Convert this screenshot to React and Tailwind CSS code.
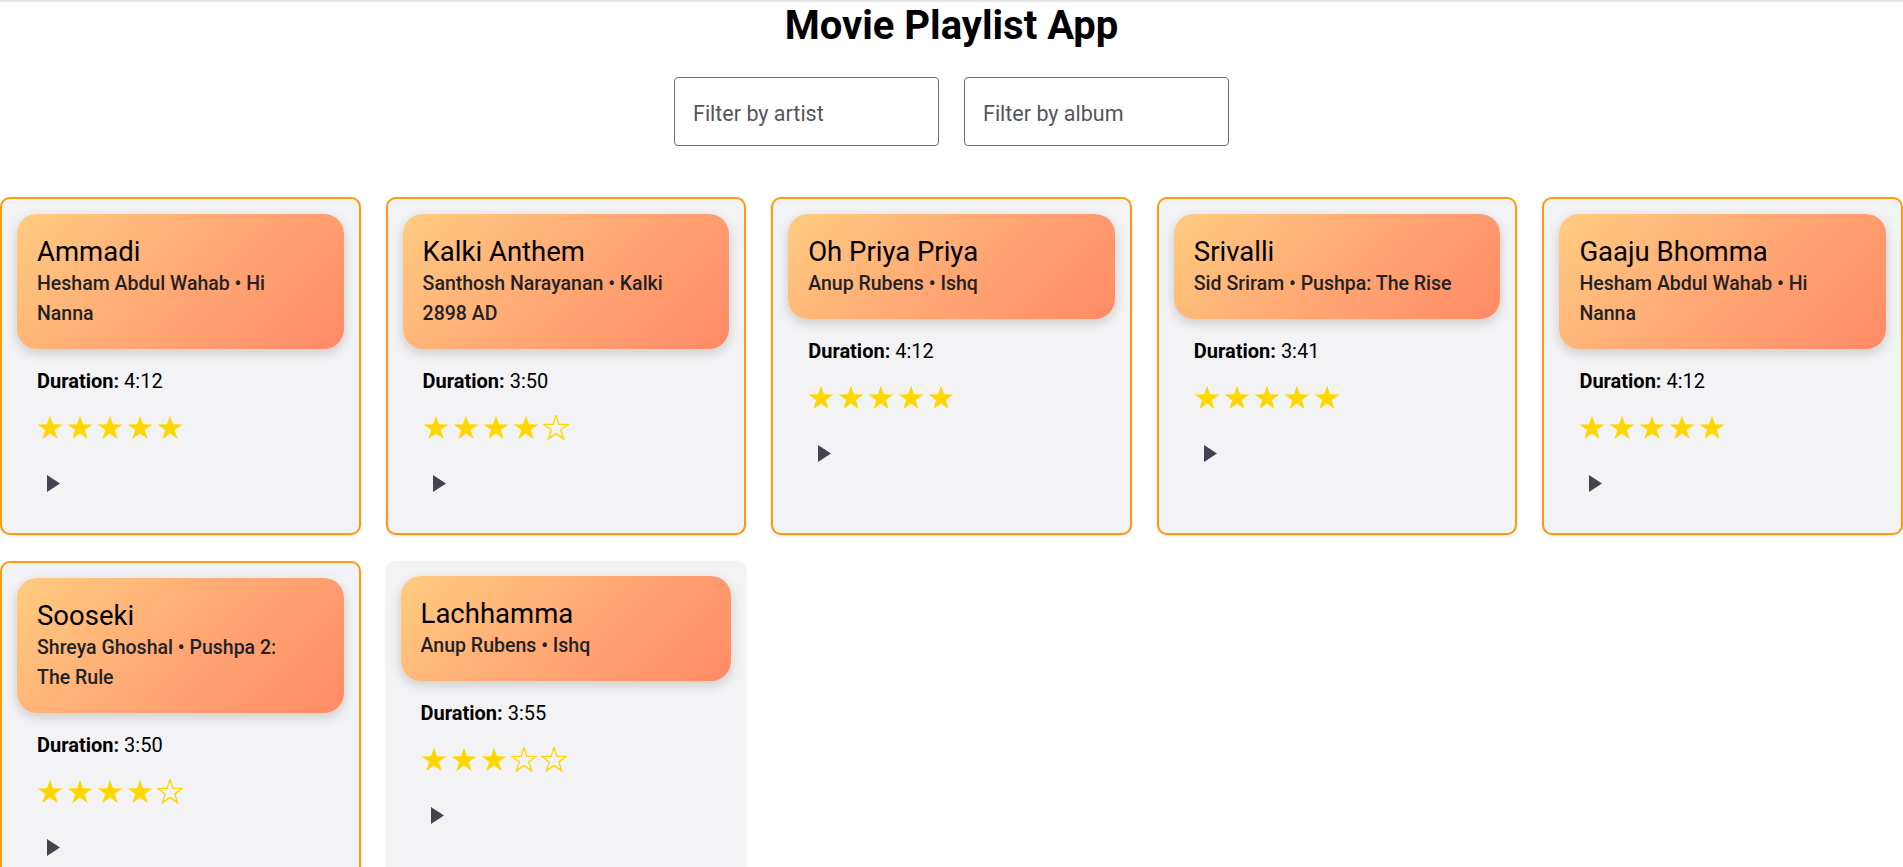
const songs = [
  { title: "Ammadi", artist: "Hesham Abdul Wahab", album: "Hi Nanna", duration: "4:12", rating: 5, active: true },
  { title: "Kalki Anthem", artist: "Santhosh Narayanan", album: "Kalki 2898 AD", duration: "3:50", rating: 4, active: true },
  { title: "Oh Priya Priya", artist: "Anup Rubens", album: "Ishq", duration: "4:12", rating: 5, active: true },
  { title: "Srivalli", artist: "Sid Sriram", album: "Pushpa: The Rise", duration: "3:41", rating: 5, active: true },
  { title: "Gaaju Bhomma", artist: "Hesham Abdul Wahab", album: "Hi Nanna", duration: "4:12", rating: 5, active: true },
  { title: "Sooseki", artist: "Shreya Ghoshal", album: "Pushpa 2: The Rule", duration: "3:50", rating: 4, active: true },
  { title: "Lachhamma", artist: "Anup Rubens", album: "Ishq", duration: "3:55", rating: 3, active: false },
];

// five point star, centred in a 26x25 box
const starPoints = Array.from({ length: 10 }, (_, i) => {
  const r = i % 2 === 0 ? 13 : 5;
  const a = (Math.PI / 5) * i;
  return `${(13 + r * Math.sin(a)).toFixed(2)},${(13.4 - r * Math.cos(a)).toFixed(2)}`;
}).join(" ");

function Star({ filled }) {
  return (
    <svg width="26" height="25" viewBox="0 0 26 25">
      <polygon
        points={starPoints}
        fill={filled ? "#ffd700" : "none"}
        stroke="#ffd700"
        strokeWidth={filled ? 0 : 1.4}
      />
    </svg>
  );
}

function SongCard({ song }) {
  return (
    <div
      className={
        song.active
          ? "rounded-[10px] border-2 border-[#ff9a0e] bg-[#f3f3f5] p-[15px] shadow-[0_1px_3px_rgba(0,0,0,0.12)]"
          : "rounded-[10px] bg-[#f3f3f5] p-[15px] shadow-[0_1px_3px_rgba(0,0,0,0.1)]"
      }
    >
      <div className="rounded-[20px] bg-[linear-gradient(135deg,#ffcb80_0%,#ffa874_50%,#ff8a65_100%)] py-5 pl-5 pr-[34px] shadow-[0_4px_12px_rgba(0,0,0,0.17)]">
        <h2 className="text-[27.5px] font-normal leading-[1.28] text-black">{song.title}</h2>
        <p className="text-[19.5px] font-medium leading-[30px] text-[#1f2226]">
          {song.artist} • {song.album}
        </p>
      </div>
      <div className="px-5 pt-[17px] pb-4">
        <p className="text-[20px] leading-[30px] text-black">
          <span className="font-bold">Duration:</span> {song.duration}
        </p>
        <div className="mt-[19px] flex gap-1">
          {[1, 2, 3, 4, 5].map((n) => (
            <Star key={n} filled={n <= song.rating} />
          ))}
        </div>
        <button className="mt-[25px] block p-[10px]">
          <svg width="13" height="17" viewBox="0 0 13 17">
            <polygon points="0,0 13,8.5 0,17" fill="#41444f" />
          </svg>
        </button>
      </div>
    </div>
  );
}

export default function App() {
  return (
    <div className="min-h-screen border-t-2 border-[#e6e6e6] bg-white font-['Roboto',sans-serif]">
      <h1 className="m-0 text-center text-[40px] font-bold leading-[48px] text-black">Movie Playlist App</h1>
      <div className="mt-[27px] flex justify-center gap-[25px]">
        <input
          className="h-[69px] w-[265px] rounded border border-[#6f6e76] px-[18px] pt-[3px] text-[21.5px] placeholder:text-[#55555c]"
          placeholder="Filter by artist"
        />
        <input
          className="h-[69px] w-[265px] rounded border border-[#6f6e76] px-[18px] pt-[3px] text-[21.5px] placeholder:text-[#55555c]"
          placeholder="Filter by album"
        />
      </div>
      <div className="mt-[51px] grid grid-cols-5 gap-x-[25px] gap-y-[26px]">
        {songs.map((s) => (
          <SongCard key={s.title} song={s} />
        ))}
      </div>
    </div>
  );
}
